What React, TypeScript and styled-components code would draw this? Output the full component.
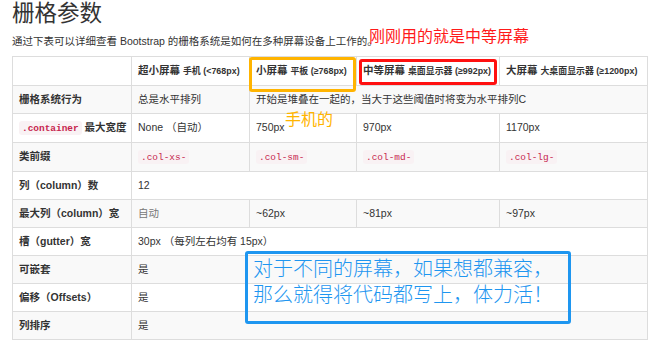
import React from "react";
import styled, { createGlobalStyle } from "styled-components";

// ページ全体の基本スタイル
const GlobalStyle = createGlobalStyle`
  html, body {
    margin: 0;
    padding: 0;
    background: #fff;
  }
  body {
    font-family: "Liberation Sans", "Noto Sans CJK SC", sans-serif;
    font-size: 10.5px;
    line-height: 1.42857;
    color: #333;
  }
`;

const Page = styled.div`
  position: relative;
  width: 659px;
  height: 353px;
  overflow: hidden;
  padding: 0 12px;
  box-sizing: border-box;
`;

const Title = styled.h2`
  margin: 2px 0 0;
  font-size: 22.5px;
  font-weight: 400;
  line-height: 1.1;
`;

const Lead = styled.p`
  margin: 7px 0 7px;
`;

const Grid = styled.table`
  width: 636px;
  border-collapse: collapse;
  border-spacing: 0;
  table-layout: fixed;
  border: 1px solid #ddd;
`;

const Row = styled.tr<{ $striped?: boolean }>`
  background: ${(p) => (p.$striped ? "#f9f9f9" : "#fff")};
`;

const RowHead = styled.th`
  padding: 6px;
  border: 1px solid #ddd;
  line-height: 15px;
  text-align: left;
  font-weight: bold;
  white-space: nowrap;
  vertical-align: top;
`;

const Cell = styled.td<{ $muted?: boolean }>`
  padding: 6px;
  border: 1px solid #ddd;
  line-height: 15px;
  white-space: nowrap;
  vertical-align: top;
  color: ${(p) => (p.$muted ? "#777" : "#333")};
`;

const Small = styled.small`
  font-size: 85%;
`;

const Code = styled.code`
  font-family: "Liberation Mono", monospace;
  font-size: 90%;
  padding: 1.5px 3px;
  color: #c7254e;
  background: #f9f2f4;
  border-radius: 3px;
`;

// 注釈（スクリーンショット上の書き込み）
const Note = styled.div<{ $color: string; $size: number }>`
  position: absolute;
  color: ${(p) => p.$color};
  font-size: ${(p) => p.$size}px;
  line-height: 1.2;
  white-space: nowrap;
`;

const Frame = styled.div<{ $color: string }>`
  position: absolute;
  box-sizing: border-box;
  border: 3px solid ${(p) => p.$color};
  border-radius: 3px;
`;

const Bubble = styled(Frame)`
  padding: 2px 5px;
  font-size: 20px;
  font-weight: 300;
  line-height: 26px;
  color: #1e96f0;
  white-space: nowrap;
`;

const heads: [string, string][] = [
  ["超小屏幕", "手机 (<768px)"],
  ["小屏幕", "平板 (≥768px)"],
  ["中等屏幕", "桌面显示器 (≥992px)"],
  ["大屏幕", "大桌面显示器 (≥1200px)"],
];

export default function App() {
  return (
    <>
      <GlobalStyle />
      <Page>
        <Title>栅格参数</Title>
        <Lead>通过下表可以详细查看 Bootstrap 的栅格系统是如何在多种屏幕设备上工作的。</Lead>
        <Grid>
          <colgroup>
            <col style={{ width: 119 }} />
            <col style={{ width: 118 }} />
            <col style={{ width: 107 }} />
            <col style={{ width: 143 }} />
            <col style={{ width: 148 }} />
          </colgroup>
          <thead>
            <Row>
              <RowHead />
              {heads.map(([name, sub]) => (
                <RowHead key={name}>
                  {name} <Small>{sub}</Small>
                </RowHead>
              ))}
            </Row>
          </thead>
          <tbody>
            <Row $striped>
              <RowHead>栅格系统行为</RowHead>
              <Cell>总是水平排列</Cell>
              <Cell colSpan={3}>开始是堆叠在一起的，当大于这些阈值时将变为水平排列C</Cell>
            </Row>
            <Row>
              <RowHead>
                <Code>.container</Code> 最大宽度
              </RowHead>
              <Cell>None （自动）</Cell>
              <Cell>750px</Cell>
              <Cell>970px</Cell>
              <Cell>1170px</Cell>
            </Row>
            <Row $striped>
              <RowHead>类前缀</RowHead>
              {["xs", "sm", "md", "lg"].map((s) => (
                <Cell key={s}>
                  <Code>.col-{s}-</Code>
                </Cell>
              ))}
            </Row>
            <Row>
              <RowHead>列（column）数</RowHead>
              <Cell colSpan={4}>12</Cell>
            </Row>
            <Row $striped>
              <RowHead>最大列（column）宽</RowHead>
              <Cell $muted>自动</Cell>
              <Cell>~62px</Cell>
              <Cell>~81px</Cell>
              <Cell>~97px</Cell>
            </Row>
            <Row>
              <RowHead>槽（gutter）宽</RowHead>
              <Cell colSpan={4}>30px （每列左右均有 15px）</Cell>
            </Row>
            <Row $striped>
              <RowHead>可嵌套</RowHead>
              <Cell colSpan={4}>是</Cell>
            </Row>
            <Row>
              <RowHead>偏移（Offsets）</RowHead>
              <Cell colSpan={4}>是</Cell>
            </Row>
            <Row $striped>
              <RowHead>列排序</RowHead>
              <Cell colSpan={4}>是</Cell>
            </Row>
          </tbody>
        </Grid>

        <Note $color="#ff1a1a" $size={16} style={{ left: 369, top: 27 }}>
          刚刚用的就是中等屏幕
        </Note>
        <Frame $color="#ffb400" style={{ left: 249, top: 57, width: 107, height: 35 }} />
        <Frame $color="#ff1010" style={{ left: 359, top: 59, width: 138, height: 26 }} />
        <Note $color="#ffb400" $size={16} style={{ left: 285, top: 110 }}>
          手机的
        </Note>
        <Bubble $color="#1e96f0" style={{ left: 245, top: 251, width: 326, height: 73 }}>
          对于不同的屏幕，如果想都兼容，
          <br />
          那么就得将代码都写上，体力活！
        </Bubble>
      </Page>
    </>
  );
}
